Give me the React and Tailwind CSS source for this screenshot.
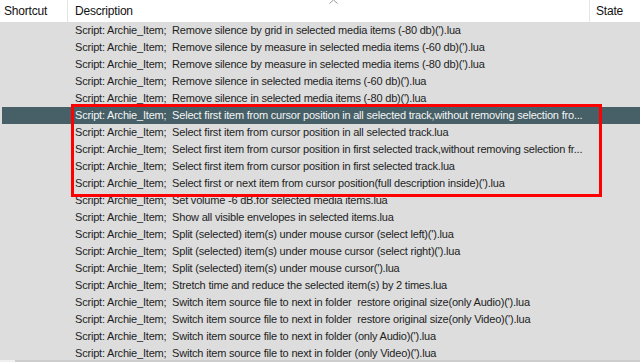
const PREFIX = 'Script: Archie_Item;\u00a0\u00a0';

const rows = [
  'Remove silence by grid in selected media items (-80 db)(\').lua',
  'Remove silence by measure in selected media items (-60 db)(\').lua',
  'Remove silence by measure in selected media items (-80 db)(\').lua',
  'Remove silence in selected media items (-60 db)(\').lua',
  'Remove silence in selected media items (-80 db)(\').lua',
  'Select first item from cursor position in all selected track,without removing selection fro...',
  'Select first item from cursor position in all selected track.lua',
  'Select first item from cursor position in first selected track,without removing selection fr...',
  'Select first item from cursor position in first selected track.lua',
  'Select first or next item from cursor position(full description inside)(\').lua',
  'Set volume -6 dB.for selected media items.lua',
  'Show all visible envelopes in selected items.lua',
  'Split (selected) item(s) under mouse cursor (select left)(\').lua',
  'Split (selected) item(s) under mouse cursor (select right)(\').lua',
  'Split (selected) item(s) under mouse cursor(\').lua',
  'Stretch time and reduce the selected item(s) by 2 times.lua',
  'Switch item source file to next in folder \u00a0restore original size(only Audio)(\').lua',
  'Switch item source file to next in folder \u00a0restore original size(only Video)(\').lua',
  'Switch item source file to next in folder (only Audio)(\').lua',
  'Switch item source file to next in folder (only Video)(\').lua',
];

function Row({ text, selected }) {
  return (
    <div className="flex h-[17px] shrink-0">
      <div className={`flex flex-1 items-center ml-[2px] ${selected ? 'bg-[#475f66] text-[#f4f6f6]' : 'text-[#1e1e1e]'}`}>
        <div className="w-[66px] shrink-0" />
        <div className="w-[522px] shrink-0 pl-[7px] whitespace-nowrap tracking-[-0.2px]">{PREFIX + text}</div>
        <div className="flex-1" />
      </div>
    </div>
  );
}

export default function App() {
  return (
    <div className="relative w-[640px] h-[362px] flex flex-col bg-[#dcdddc] overflow-hidden text-[11px] leading-none font-['Liberation_Sans',Arial,sans-serif]">
      {/* Header */}
      <div className="flex h-[22px] shrink-0 bg-white text-[#111] text-[12px] tracking-[-0.2px]">
        <div className="w-[68px] flex items-center pl-[4px] border-r border-[#e5e5e5]">Shortcut</div>
        <div className="relative w-[522px] flex items-center pl-[7px] border-r border-[#e5e5e5]">
          Description
          <svg className="absolute left-[261px] top-0" width="9" height="4" viewBox="0 0 9 4">
            <path d="M0.5 3.5 L4.5 0 L8.5 3.5" fill="none" stroke="#9a9a9a" strokeWidth="1" />
          </svg>
        </div>
        <div className="flex-1 flex items-center pl-[6px]">State</div>
      </div>

      {/* List */}
      <div className="flex-1 flex flex-col overflow-hidden">
        {rows.map((r, i) => (
          <Row key={i} text={r} selected={i === 5} />
        ))}
      </div>

      {/* Horizontal scrollbar (cut off) */}
      <div className="flex h-[2px] shrink-0">
        <div className="w-[15px] bg-[#f0f0f0]" />
        <div className="flex-1 bg-[#cdcdcd]" />
      </div>

      {/* Red annotation box */}
      <div className="absolute left-[71px] top-[104px] w-[531px] h-[93px] border-[3px] border-[#ff0000] pointer-events-none" />
    </div>
  );
}
